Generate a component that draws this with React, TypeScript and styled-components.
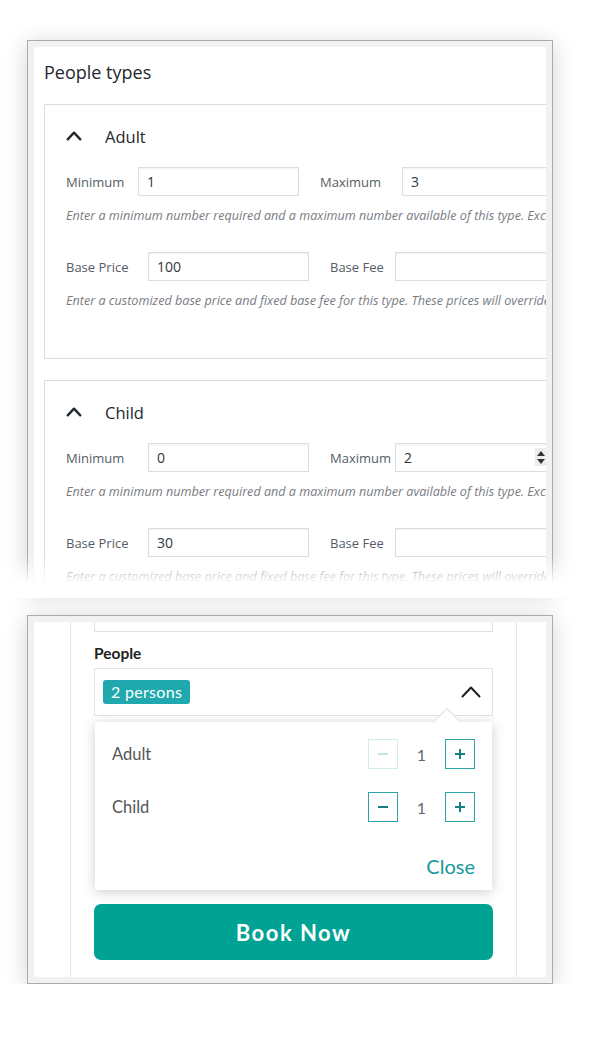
import React from "react";
import styled, { createGlobalStyle } from "styled-components";

const Global = createGlobalStyle`
  html, body { margin: 0; padding: 0; background: #ffffff; }
  * { box-sizing: border-box; }
`;

const Page = styled.div`
  padding: 40px 0 0 27px;
  display: flex;
  flex-direction: column;
`;

const TopWrap = styled.div`
  position: relative;
  width: 526px;
  height: 550px;
`;

const BottomWrap = styled.div`
  margin-top: 25px;
`;

const Frame = styled.div<{ $h: number }>`
  width: 526px;
  height: ${(p) => p.$h}px;
  border: 1px solid #ababab;
  background: #f1f1f1;
  padding: 6px;
  box-shadow: 0 4px 22px rgba(0, 0, 0, 0.18);
`;

const Fade = styled.div`
  position: absolute;
  left: -40px;
  right: -40px;
  top: 516px;
  bottom: -8px;
  background: linear-gradient(to bottom, rgba(255, 255, 255, 0) 0px, #ffffff 28px);
`;

const AdminContent = styled.div`
  height: 100%;
  background: #fff;
  overflow: hidden;
  padding: 13px 0 0 10px;
  font-family: "Open Sans", "Noto Sans", sans-serif;
`;

const Heading = styled.h2`
  margin: 0 0 20px;
  font-size: 18px;
  font-weight: 400;
  line-height: 24px;
  color: #23282d;
`;

const Card = styled.div`
  width: 620px;
  background: #fff;
  border: 1px solid #dcdcdc;
  padding: 19px 0 48px 21px;
  & + & {
    margin-top: 21px;
  }
`;

const CardHeader = styled.div`
  display: flex;
  align-items: center;
  gap: 23px;
  height: 24px;
  font-size: 16.5px;
  color: #23282d;
`;

const FieldRow = styled.div<{ $mt: number }>`
  display: flex;
  align-items: center;
  height: 29px;
  margin-top: ${(p) => p.$mt}px;
`;

const FieldLabel = styled.span<{ $w: number }>`
  width: ${(p) => p.$w}px;
  flex: none;
  font-size: 13px;
  color: #555d66;
`;

const InputWrap = styled.div`
  position: relative;
  flex: none;
  margin-right: 21px;
`;

const TextInput = styled.input`
  display: block;
  width: 161px;
  height: 29px;
  border: 1px solid #dddddd;
  box-shadow: inset 0 1px 2px rgba(0, 0, 0, 0.06);
  background: #fff;
  padding: 0 8px;
  font-family: "Open Sans", "Noto Sans", sans-serif;
  font-size: 14px;
  color: #32373c;
  outline: none;
`;

const Spinner = styled.div`
  position: absolute;
  left: 140px;
  top: 5px;
  width: 11px;
  height: 18px;
  background: #ececec;
  display: flex;
  flex-direction: column;
  align-items: center;
  justify-content: center;
  gap: 3px;
`;

const Tri = styled.span<{ $down?: boolean }>`
  width: 0;
  height: 0;
  border-left: 4px solid transparent;
  border-right: 4px solid transparent;
  ${(p) => (p.$down ? "border-top: 5px solid #333;" : "border-bottom: 5px solid #333;")}
`;

const Help = styled.p`
  margin: 11px 0 0;
  font-size: 12.6px;
  font-style: italic;
  line-height: 18px;
  color: #787c82;
  white-space: nowrap;
`;

const BottomContent = styled.div`
  height: 100%;
  background: #fff;
  padding-left: 36px;
  display: flex;
  font-family: Lato, "Noto Sans", sans-serif;
`;

const Column = styled.div`
  width: 447px;
  height: 100%;
  border-left: 1px solid #e6e6e6;
  border-right: 1px solid #e6e6e6;
  padding: 0 0 17px 23px;
  display: flex;
  flex-direction: column;
`;

const ClippedInput = styled.div`
  width: 399px;
  height: 10px;
  border: 1px solid #e0e0e0;
  border-top: none;
`;

const WidgetLabel = styled.div`
  margin-top: 11px;
  font-size: 15.5px;
  font-weight: 700;
  line-height: 20px;
  color: #222;
`;

const Select = styled.div`
  margin-top: 5px;
  width: 399px;
  height: 48px;
  border: 1px solid #e2e2e2;
  display: flex;
  align-items: center;
  justify-content: space-between;
  padding: 0 11px 0 8px;
`;

const Badge = styled.span`
  height: 24px;
  padding: 0 8px;
  border-radius: 3px;
  background: #1fa8ad;
  color: #fff;
  font-size: 16px;
  letter-spacing: 0.3px;
  line-height: 24px;
`;

const Dropdown = styled.div`
  position: relative;
  margin: 6px 0 0 1px;
  width: 397px;
  background: #fff;
  box-shadow: 0 2px 12px rgba(0, 0, 0, 0.2);
  padding: 17px 17px 12px 17px;
`;

const Notch = styled.span`
  position: absolute;
  top: -10px;
  left: 342px;
  width: 20px;
  height: 20px;
  background: #fff;
  border-top: 1px solid #e2e2e2;
  border-left: 1px solid #e2e2e2;
  transform: rotate(45deg);
`;

const CounterRow = styled.div`
  display: flex;
  align-items: center;
  justify-content: space-between;
  height: 30px;
  & + & {
    margin-top: 23px;
  }
`;

const RowLabel = styled.span`
  font-size: 16.5px;
  color: #555;
`;

const Counter = styled.div`
  display: flex;
  align-items: center;
`;

const StepButton = styled.button<{ $disabled?: boolean }>`
  width: 30px;
  height: 30px;
  padding: 0;
  background: #fff;
  border: 1px solid ${(p) => (p.$disabled ? "#d3eced" : "#2ea3a5")};
  color: ${(p) => (p.$disabled ? "#c3e4e5" : "#137f81")};
  display: flex;
  align-items: center;
  justify-content: center;
  cursor: pointer;
`;

const Count = styled.span`
  width: 47px;
  text-align: center;
  font-size: 16px;
  color: #666;
`;

const CloseRow = styled.div`
  margin-top: 32px;
  text-align: right;
  font-size: 20px;
  line-height: 24px;
  color: #17999b;
`;

const BookButton = styled.button`
  margin-top: 14px;
  width: 399px;
  height: 56px;
  border: none;
  border-radius: 7px;
  background: #00a393;
  color: #fff;
  font-family: Lato, "Noto Sans", sans-serif;
  font-weight: 700;
  font-size: 22px;
  letter-spacing: 1.5px;
  cursor: pointer;
`;

const HeaderIcon = styled.span`
  display: flex;
  color: #23282d;
`;

const SelectIcon = styled.span`
  display: flex;
  color: #222;
`;

const ChevronUp = ({ w, h, sw }: { w: number; h: number; sw: number }) => (
  <svg width={w} height={h} viewBox={`0 0 ${w} ${h}`} fill="none">
    <path
      d={`M${sw / 2 + 0.5} ${h - sw / 2 - 0.5} L${w / 2} ${sw / 2 + 0.5} L${w - sw / 2 - 0.5} ${h - sw / 2 - 0.5}`}
      stroke="currentColor"
      strokeWidth={sw}
      strokeLinecap="round"
      strokeLinejoin="round"
    />
  </svg>
);

const Sign = ({ plus }: { plus?: boolean }) => (
  <svg width="12" height="12" viewBox="0 0 12 12">
    <path d="M1 6 H11" stroke="currentColor" strokeWidth="2" />
    {plus && <path d="M6 1 V11" stroke="currentColor" strokeWidth="2" />}
  </svg>
);

const helpMin =
  "Enter a minimum number required and a maximum number available of this type. Exclude the requirement by setting both to zero.";
const helpPrice =
  "Enter a customized base price and fixed base fee for this type. These prices will override the default prices.";

type Row = { l1: string; w1: number; v1: string; l2: string; w2: number; v2: string; spin?: boolean };

const PeopleCard = ({ title, rows }: { title: string; rows: Row[] }) => (
  <Card>
    <CardHeader>
      <HeaderIcon>
        <ChevronUp w={16} h={10} sw={2.4} />
      </HeaderIcon>
      <span>{title}</span>
    </CardHeader>
    {rows.map((r, i) => (
      <React.Fragment key={i}>
        <FieldRow $mt={i === 0 ? 19 : 27}>
          <FieldLabel $w={r.w1}>{r.l1}</FieldLabel>
          <InputWrap>
            <TextInput readOnly value={r.v1} />
          </InputWrap>
          <FieldLabel $w={r.w2}>{r.l2}</FieldLabel>
          <InputWrap>
            <TextInput readOnly value={r.v2} />
            {r.spin && (
              <Spinner>
                <Tri />
                <Tri $down />
              </Spinner>
            )}
          </InputWrap>
        </FieldRow>
        <Help>{i === 0 ? helpMin : helpPrice}</Help>
      </React.Fragment>
    ))}
  </Card>
);

const CounterLine = ({ label, minusDisabled }: { label: string; minusDisabled?: boolean }) => (
  <CounterRow>
    <RowLabel>{label}</RowLabel>
    <Counter>
      <StepButton $disabled={minusDisabled}>
        <Sign />
      </StepButton>
      <Count>1</Count>
      <StepButton>
        <Sign plus />
      </StepButton>
    </Counter>
  </CounterRow>
);

export default function App() {
  return (
    <>
      <Global />
      <Page>
        <TopWrap>
          <Frame $h={550}>
            <AdminContent>
              <Heading>People types</Heading>
              <PeopleCard
                title="Adult"
                rows={[
                  { l1: "Minimum", w1: 72, v1: "1", l2: "Maximum", w2: 82, v2: "3" },
                  { l1: "Base Price", w1: 82, v1: "100", l2: "Base Fee", w2: 65, v2: "" },
                ]}
              />
              <PeopleCard
                title="Child"
                rows={[
                  { l1: "Minimum", w1: 82, v1: "0", l2: "Maximum", w2: 65, v2: "2", spin: true },
                  { l1: "Base Price", w1: 82, v1: "30", l2: "Base Fee", w2: 65, v2: "" },
                ]}
              />
            </AdminContent>
          </Frame>
          <Fade />
        </TopWrap>

        <BottomWrap>
          <Frame $h={369}>
            <BottomContent>
              <Column>
                <ClippedInput />
                <WidgetLabel>People</WidgetLabel>
                <Select>
                  <Badge>2 persons</Badge>
                  <SelectIcon>
                    <ChevronUp w={20} h={12} sw={2} />
                  </SelectIcon>
                </Select>
                <Dropdown>
                  <Notch />
                  <CounterLine label="Adult" minusDisabled />
                  <CounterLine label="Child" />
                  <CloseRow>Close</CloseRow>
                </Dropdown>
                <BookButton>Book Now</BookButton>
              </Column>
            </BottomContent>
          </Frame>
        </BottomWrap>
      </Page>
    </>
  );
}
